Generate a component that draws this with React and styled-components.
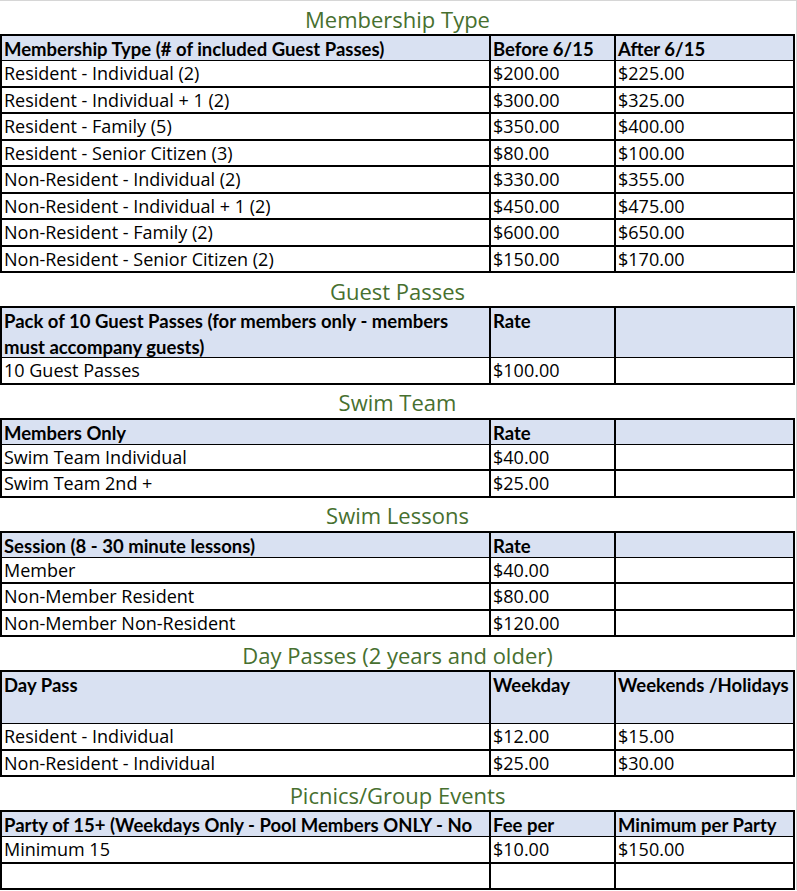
import React from 'react';
import styled, { createGlobalStyle } from 'styled-components';

const GlobalStyle = createGlobalStyle`
  html, body {
    margin: 0;
    padding: 0;
    background: #fff;
  }
  body {
    font-family: "Open Sans", Lato, "Noto Sans", sans-serif;
    color: #000;
  }
`

const Sheet = styled.div`
  width: 797px;
  box-sizing: border-box;
  border-top: 1px solid #d6d6d6;
  border-right: 1px solid #d6d6d6;
`

const Title = styled.div`
  height: 33px;
  display: flex;
  align-items: center;
  justify-content: center;
  padding-top: 2px;
  box-sizing: border-box;
  width: 795px;
  font-size: 22px;
  color: #47702f;
`

const Table = styled.div`
  width: 795px;
  box-sizing: border-box;
  border: 2px solid #000;
  border-bottom: none;
`

const Row = styled.div`
  display: grid;
  grid-template-columns: 487px 125px 179px;
  height: ${p => p.$h}px;
  box-sizing: border-box;
  border-bottom: ${p => p.$head ? '1px' : '2px'} solid #000;
  background: ${p => p.$head ? '#d9e1f2' : '#fff'};
`

const Cell = styled.div`
  box-sizing: border-box;
  border-left: ${p => p.$first ? 'none' : '2px solid #000'};
  padding: ${p => p.$head ? '0 2px' : '1px 2px 0'};
  display: flex;
  align-items: ${p => p.$head ? 'flex-start' : 'center'};
  font-family: ${p => p.$head ? 'Lato, "Open Sans", sans-serif' : '"Open Sans", Lato, sans-serif'};
  font-size: ${p => p.$head ? '18.5px' : '18px'};
  line-height: ${p => p.$head ? '26px' : '25px'};
  font-weight: ${p => p.$head ? 700 : 400};
  white-space: nowrap;
  overflow: hidden;
`

const sections = [
  {
    title: 'Membership Type',
    head: ['Membership Type (# of included Guest Passes)', 'Before 6/15', 'After 6/15'],
    headH: 25,
    rows: [
      ['Resident - Individual (2)', '$200.00', '$225.00'],
      ['Resident - Individual + 1 (2)', '$300.00', '$325.00'],
      ['Resident - Family (5)', '$350.00', '$400.00'],
      ['Resident - Senior Citizen (3)', '$80.00', '$100.00'],
      ['Non-Resident - Individual (2)', '$330.00', '$355.00'],
      ['Non-Resident - Individual + 1 (2)', '$450.00', '$475.00'],
      ['Non-Resident - Family (2)', '$600.00', '$650.00'],
      ['Non-Resident - Senior Citizen (2)', '$150.00', '$170.00'],
    ],
  },
  {
    title: 'Guest Passes',
    head: [
      <>Pack of 10 Guest Passes (for members only - members<br />must accompany guests)</>,
      'Rate',
      '',
    ],
    headH: 50,
    rows: [['10 Guest Passes', '$100.00', '']],
  },
  {
    title: 'Swim Team',
    head: ['Members Only', 'Rate', ''],
    headH: 25,
    rows: [
      ['Swim Team Individual', '$40.00', ''],
      ['Swim Team 2nd +', '$25.00', ''],
    ],
  },
  {
    title: 'Swim Lessons',
    head: ['Session (8 - 30 minute lessons)', 'Rate', ''],
    headH: 25,
    rows: [
      ['Member', '$40.00', ''],
      ['Non-Member Resident', '$80.00', ''],
      ['Non-Member Non-Resident', '$120.00', ''],
    ],
  },
  {
    title: 'Day Passes (2 years and older)',
    head: ['Day Pass', 'Weekday', 'Weekends /Holidays'],
    headH: 52,
    rows: [
      ['Resident - Individual', '$12.00', '$15.00'],
      ['Non-Resident - Individual', '$25.00', '$30.00'],
    ],
  },
  {
    title: 'Picnics/Group Events',
    head: ['Party of 15+ (Weekdays Only - Pool Members ONLY - No', 'Fee per', 'Minimum per Party'],
    headH: 25,
    rows: [
      ['Minimum 15', '$10.00', '$150.00'],
      ['', '', ''],
    ],
  },
];

export default function App() {
  return (
    <>
      <GlobalStyle />
      <Sheet>
        {sections.map((s) => (
          <React.Fragment key={s.title}>
            <Title>{s.title}</Title>
            <Table>
              <Row $head $h={s.headH}>
                {s.head.map((h, j) => (
                  <Cell key={j} $head $first={j === 0}>
                    <div>{h}</div>
                  </Cell>
                ))}
              </Row>
              {s.rows.map((r, k) => (
                <Row key={k} $h={26.5}>
                  {r.map((c, j) => (
                    <Cell key={j} $first={j === 0}>{c}</Cell>
                  ))}
                </Row>
              ))}
            </Table>
          </React.Fragment>
        ))}
      </Sheet>
    </>
  );
}
